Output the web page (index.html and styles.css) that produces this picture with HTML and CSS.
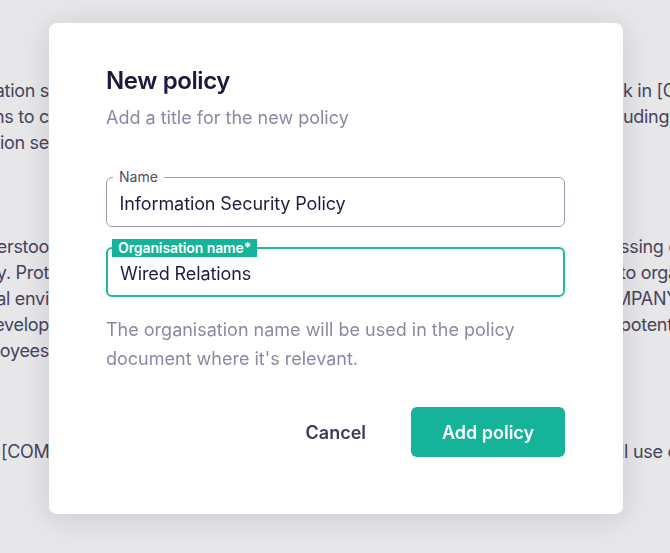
FILE: index.html
```html
<!DOCTYPE html>
<html lang="en">
<head>
	<meta charset="UTF-8">
	<title>New policy</title>
	<link rel="stylesheet" href="styles.css">
</head>
<body>
    <div class="doc">
        <div class="doc_line"><span class="side left">information security organisation s</span><span class="side right">k in [COMPANY]</span></div>
        <div class="doc_line"><span class="side left">the actions to c</span><span class="side right">uding all</span></div>
        <div class="doc_line"><span class="side left">Information se</span><span class="side right"></span></div>
        <div class="doc_line"></div>
        <div class="doc_line"></div>
        <div class="doc_line"></div>
        <div class="doc_line"><span class="side left">is well understoo</span><span class="side right cut">ssing of</span></div>
        <div class="doc_line"><span class="side left">responsibility. Prot</span><span class="side right cut">to organ</span></div>
        <div class="doc_line"><span class="side left">the external envi</span><span class="side right cut_more">MPANY]</span></div>
        <div class="doc_line"><span class="side left">the develop</span><span class="side right cut">potential</span></div>
        <div class="doc_line"><span class="side left">all employees</span><span class="side right"></span></div>
        <div class="doc_line"></div>
        <div class="doc_line"></div>
        <div class="doc_line short"></div>
        <div class="doc_line"><span class="side start">[COMPANY] wil</span><span class="side right cut">ll use of</span></div>
    </div>

    <div class="modal">
        <h2 class="modal_title">New policy</h2>
        <p class="modal_sub">Add a title for the new policy</p>

        <div class="field">
            <span class="field_label">Name</span>
            <input class="field_input" type="text" value="Information Security Policy">
        </div>

        <div class="field active">
            <span class="field_label">Organisation name*</span>
            <input class="field_input" type="text" value="Wired Relations">
        </div>

        <p class="hint">The organisation name will be used in the policy document where it's relevant.</p>

        <div class="actions">
            <button class="btn btn_cancel">Cancel</button>
            <button class="btn btn_primary">Add policy</button>
        </div>
    </div>
</body>
</html>
```

FILE: styles.css
```css
*{
    box-sizing: border-box;
}
body{
    margin: 0;
    height: 553px;
    overflow: hidden;
    background: #e7e7ea;
    font-family: Inter, "Noto Sans", sans-serif;
}
.doc{
    padding-top: 78px;
    color: #46445c;
    font-size: 18px;
    letter-spacing: -0.3px;
}
.doc_line{
    height: 26px;
    line-height: 26px;
    display: flex;
    justify-content: space-between;
}
.short{
    height: 23px;
}
.side{
    width: 49px;
    overflow: hidden;
    white-space: nowrap;
    display: flex;
}
.left{
    justify-content: flex-end;
}
.start{
    justify-content: flex-start;
    padding-left: 1px;
}
.right{
    width: 47px;
}
.cut{
    text-indent: -3px;
}
.cut_more{
    text-indent: -8px;
}
.modal{
    position: fixed;
    top: 23px;
    left: 49px;
    width: 574px;
    height: 491px;
    background: #fff;
    border-radius: 8px;
    box-shadow: 0 4px 28px rgba(30, 30, 50, 0.14);
    padding: 42px 58px 0 57px;
}
.modal_title{
    margin: 0;
    font-size: 24px;
    line-height: 32px;
    font-weight: 600;
    letter-spacing: -0.4px;
    color: #1c1a3c;
}
.modal_sub{
    margin: 7px 0 0;
    font-size: 18px;
    line-height: 28px;
    color: #8b89a2;
}
.field{
    position: relative;
    margin-top: 45px;
    height: 50px;
    border: 1.5px solid #9e9cb0;
    border-radius: 6px;
}
.field + .field{
    margin-top: 20px;
}
.field_label{
    position: absolute;
    top: -10px;
    left: 6px;
    padding: 0 6px;
    height: 18px;
    line-height: 18px;
    font-size: 14px;
    background: #fff;
    color: #4f4d66;
}
.field_input{
    width: 100%;
    height: 100%;
    border: none;
    outline: none;
    background: transparent;
    padding: 2px 0 0 12.5px;
    font-family: inherit;
    font-size: 18px;
    letter-spacing: -0.1px;
    color: #1f1d3f;
}
.active{
    border: 2px solid #22b99a;
}
.active .field_label{
    top: -10px;
    left: 4px;
    background: #15b399;
    color: #fff;
    font-weight: 600;
    letter-spacing: -0.1px;
}
.active .field_input{
    padding-left: 12px;
}
.hint{
    margin: 18px 0 0;
    font-size: 18px;
    line-height: 29px;
    color: #8b89a2;
}
.actions{
    margin-top: 34px;
    display: flex;
    justify-content: flex-end;
    align-items: center;
    gap: 21px;
}
.btn{
    height: 50px;
    border: none;
    border-radius: 6px;
    font-family: inherit;
    font-size: 18px;
    font-weight: 600;
    cursor: pointer;
}
.btn_cancel{
    background: transparent;
    color: #3b3954;
    padding: 0 24px;
}
.btn_primary{
    width: 154px;
    background: #15b399;
    color: #fff;
}
```
